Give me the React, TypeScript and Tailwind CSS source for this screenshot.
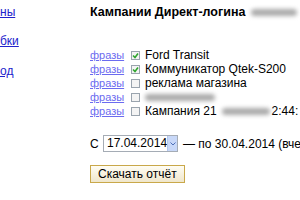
import React from 'react';

const rows = [
  { checked: true, label: 'Ford Transit' },
  { checked: true, label: 'Коммуникатор Qtek-S200' },
  { checked: false, label: 'реклама магазина' },
  { checked: false, label: null },
  { checked: false, label: 'Кампания 21', tail: '2:44:' },
];

const Blur: React.FC<{ w: string }> = ({ w }) => (
  <span className={`inline-block ${w} h-[7px] rounded-full bg-[#aaaaaa] blur-[2px]`} />
);

const Check: React.FC<{ on: boolean }> = ({ on }) => (
  <span className="w-[9px] h-[9px] border border-[#9aa4ae] bg-[#f4f4f4] flex items-center justify-center shrink-0">
    {on && (
      <svg width="7" height="7" viewBox="0 0 7 7">
        <path d="M1 3.5 L3 5.5 L6 1.5" stroke="#2fa52f" strokeWidth="1.6" fill="none" />
      </svg>
    )}
  </span>
);

export default function App() {
  return (
    <div className="w-[300px] h-[200px] overflow-hidden bg-white flex text-[12px] text-black font-['Liberation_Sans',Arial,sans-serif]">
      {/* left menu, only the tail ends of the links are in view */}
      <div className="w-[22px] shrink-0 flex flex-col pt-[4px] whitespace-nowrap">
        <a className="text-[#2222cc] underline leading-[16px]">ны</a>
        <a className="text-[#2222cc] underline leading-[16px] mt-[13px]">бки</a>
        <a className="text-[#2222cc] underline leading-[16px] mt-[14px]">од</a>
      </div>

      <div className="ml-[68px] pt-[4px] whitespace-nowrap">
        <div className="flex items-center gap-[6px] leading-[16px]">
          <span className="font-bold text-[12.5px]">Кампании Директ-логина</span>
          <Blur w="w-[46px]" />
        </div>

        <div className="mt-[28px] flex flex-col">
          {rows.map((r, i) => (
            <div key={i} className="h-[14px] flex items-center">
              <a className="w-[32px] text-[11px] text-[#6b6bf0] underline leading-[12px]">фразы</a>
              <span className="ml-[9px]"><Check on={r.checked} /></span>
              <span className="ml-[5px] flex items-center leading-[14px]">
                {r.label === null ? (
                  <Blur w="w-[70px]" />
                ) : (
                  <>
                    {r.label}
                    {r.tail && (
                      <>
                        <span className="ml-[5px] mr-[2px]"><Blur w="w-[48px]" /></span>
                        <span>{r.tail}</span>
                      </>
                    )}
                  </>
                )}
              </span>
            </div>
          ))}
        </div>

        <div className="mt-[17px] flex items-center h-[17px]">
          <span className="w-[12px]">С</span>
          <div className="ml-[1px] w-[75px] h-[17px] border border-[#a5acb5] flex items-stretch">
            <span className="flex-1 pl-[3px] leading-[15px]">17.04.2014</span>
            <span className="w-[10px] bg-[#c8d8f8] border-l border-[#b4c6ec] flex items-center justify-center">
              <svg width="6" height="4" viewBox="0 0 6 4">
                <path d="M0.5 0.5 L3 3 L5.5 0.5" stroke="#4d6fb8" strokeWidth="1" fill="none" />
              </svg>
            </span>
          </div>
          <span className="ml-[5px]">— по 30.04.2014 (вчера)</span>
        </div>

        <button className="mt-[13px] h-[18px] px-[7px] border border-[#c9a84a] bg-gradient-to-b from-[#fffdf4] to-[#efe6cc] leading-[14px] text-[12px] text-black">
          Скачать отчёт
        </button>
      </div>
    </div>
  );
}
